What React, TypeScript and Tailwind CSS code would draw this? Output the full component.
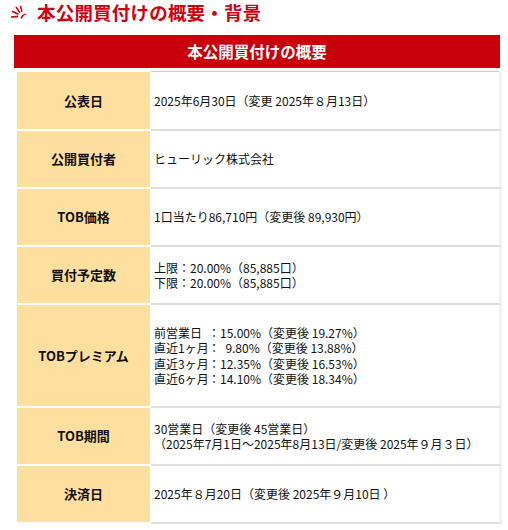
import React from "react";

const font = { fontFamily: '"Noto Sans CJK JP", "Noto Sans", sans-serif' };

function Row({ label, h, children }: { label: string; h: string; children: React.ReactNode }) {
  return (
    <div className={`flex ${h}`}>
      <div className="w-[3px] shrink-0" />
      <div className="w-[133px] shrink-0 bg-[#ffdfa0] border-b-2 border-white flex items-center justify-center font-bold text-[13px] text-[#111]">
        {label}
      </div>
      <div className="w-[1px] shrink-0" />
      <div className="flex-1 bg-white border-b-2 border-[#dedede] border-r-[3px] border-r-[#f2f2f2] flex items-center pl-[3px] text-[12px] leading-[15.5px] text-[#111]">
        <div>{children}</div>
      </div>
    </div>
  );
}

export default function App() {
  return (
    <div className="w-[508px] h-[530px] bg-white overflow-hidden" style={font}>
      <div className="flex items-center h-[23px] pl-[10px] pt-[1px]">
        <svg width="20" height="14" viewBox="0 0 20 14" className="mr-[7px]">
          <g fill="#d0000f">
            <path d="M1 11.2 L8 10.6 L8 12.4 L1 12.8 Z" />
            <path d="M2.5 5.5 L8.8 8.6 L8 10 L1.8 7 Z" />
            <path d="M6.5 1.5 L10.6 7.2 L9.3 8 L5.3 2.4 Z" />
            <path d="M11.2 0.5 L12.6 6.6 L11.2 7 L9.8 0.9 Z" />
            <path d="M10.5 13.5 Q11 9.5 15.5 8.4 L16.5 9.6 Q12.5 10.5 12.3 13.5 Z" />
          </g>
        </svg>
        <span className="text-[18.5px] font-bold text-[#d0000f] leading-none tracking-[0.2px]">本公開買付けの概要・背景</span>
      </div>
      <div className="h-[12px]" />
      <div className="ml-[14px] w-[488px]">
        <div className="w-[486px] h-[33px] bg-[#c9000b] flex items-center justify-center text-white font-bold text-[15.5px]">
          本公開買付けの概要
        </div>
        <div className="h-[3px]" />
        <div className="flex">
          <div className="w-[137px] shrink-0" />
          <div className="flex-1 h-[1px] bg-[#cccccc] mr-[3px]" />
        </div>
        <Row label="公表日" h="h-[59px]">2025年6月30日（変更 2025年８月13日）</Row>
        <Row label="公開買付者" h="h-[58px]">ヒューリック株式会社</Row>
        <Row label="TOB価格" h="h-[58px]">1口当たり86,710円（変更後 89,930円）</Row>
        <Row label="買付予定数" h="h-[58px]">
          <div>上限：20.00%（85,885口）</div>
          <div>下限：20.00%（85,885口）</div>
        </Row>
        <Row label="TOBプレミアム" h="h-[103px]">
          <div className="whitespace-pre"><span className="inline-block w-[54px]">前営業日</span>：15.00%（変更後 19.27%）</div>
          <div className="whitespace-pre"><span className="inline-block w-[54px]">直近1ヶ月</span>：  9.80%（変更後 13.88%）</div>
          <div className="whitespace-pre"><span className="inline-block w-[54px]">直近3ヶ月</span>：12.35%（変更後 16.53%）</div>
          <div className="whitespace-pre"><span className="inline-block w-[54px]">直近6ヶ月</span>：14.10%（変更後 18.34%）</div>
        </Row>
        <Row label="TOB期間" h="h-[58px]">
          <div>30営業日（変更後 45営業日）</div>
          <div>（2025年7月1日～2025年8月13日/変更後 2025年９月３日）</div>
        </Row>
        <Row label="決済日" h="h-[58px]">2025年８月20日（変更後 2025年９月10日 ）</Row>
      </div>
    </div>
  );
}
